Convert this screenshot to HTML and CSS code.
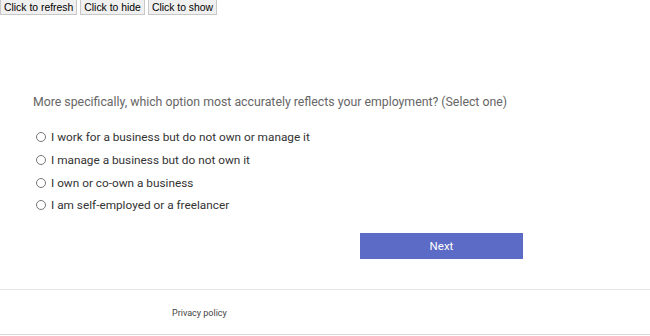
FILE: index.html
```html
<!DOCTYPE html>
<html lang="en">
<head>
    <meta charset="UTF-8">
    <meta name="viewport" content="width=device-width, initial-scale=1.0">
    <title>Survey</title>
    <link rel="stylesheet" href="styles.css">
</head>
<body>
    <div class="toolbar">
        <button class="tool">Click to refresh</button>
        <button class="tool">Click to hide</button>
        <button class="tool">Click to show</button>
    </div>
    <div class="main">
        <p class="question">More specifically, which option most accurately reflects your employment? (Select one)</p>
        <div class="options">
            <label class="option"><span class="radio"></span>I work for a business but do not own or manage it</label>
            <label class="option"><span class="radio"></span>I manage a business but do not own it</label>
            <label class="option"><span class="radio"></span>I own or co-own a business</label>
            <label class="option"><span class="radio"></span>I am self-employed or a freelancer</label>
        </div>
        <div class="actions">
            <button class="next">Next</button>
        </div>
    </div>
    <footer>
        <a href="#">Privacy policy</a>
    </footer>
</body>
</html>
```

FILE: styles.css
```css
* {
    margin: 0;
    padding: 0;
    box-sizing: border-box;
}
body {
    font-family: Roboto, Arial, sans-serif;
    background-color: #fff;
    width: 650px;
    height: 336px;
    overflow: hidden;
}
.toolbar {
    display: flex;
    gap: 3px;
    height: 15px;
}
.tool {
    font-family: "Liberation Sans", Arial, sans-serif;
    font-size: 10.4px;
    color: #000;
    background-color: #f0f0f0;
    border: 1px solid #c8c8c8;
    border-top: none;
    height: 15px;
    line-height: 13px;
    padding: 0 3px;
}
.main {
    padding: 79px 0 0 33px;
    width: 560px;
    height: 274px;
}
.question {
    font-size: 12.3px;
    color: #666;
    line-height: 16px;
    white-space: nowrap;
}
.options {
    margin-top: 16px;
    display: flex;
    flex-direction: column;
}
.option {
    display: flex;
    align-items: center;
    height: 22.7px;
    font-size: 11.8px;
    color: #333;
}
.radio {
    width: 10px;
    height: 10px;
    border: 1px solid #777;
    border-radius: 50%;
    margin: 0 5px 0 3px;
}
.actions {
    display: flex;
    justify-content: flex-end;
    width: 490px;
    margin-top: 16px;
}
.next {
    width: 163px;
    height: 26px;
    border: none;
    background-color: #5c6bc5;
    color: #fff;
    font-family: Roboto, Arial, sans-serif;
    font-size: 11.5px;
}
footer {
    border-top: 1px solid #e6e6e6;
    border-bottom: 1px solid #d8d8d8;
    height: 46px;
    padding: 11px 0 0 172px;
}
footer a {
    text-decoration: none;
    color: #444;
    font-size: 9px;
    line-height: 12px;
}
```
